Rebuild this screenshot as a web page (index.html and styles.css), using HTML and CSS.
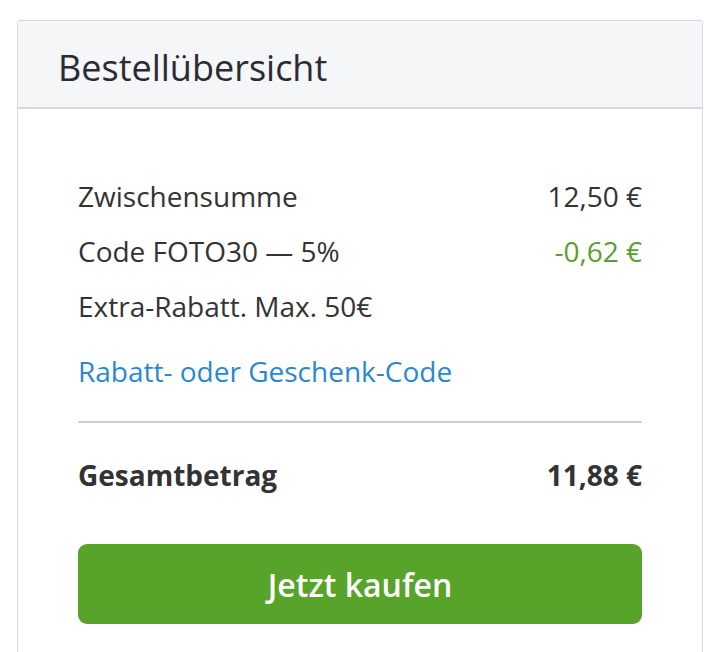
FILE: index.html
```html
<!DOCTYPE html>
<html lang="de">
<head>
<meta charset="utf-8">
<title>Bestellübersicht</title>
<link rel="stylesheet" href="styles.css">
</head>
<body>
<section class="card">
  <header class="card-header">
    <h2 class="card-title">Bestellübersicht</h2>
  </header>
  <div class="card-body">
    <div class="row">
      <span>Zwischensumme</span>
      <span>12,50 €</span>
    </div>
    <div class="row">
      <span>Code FOTO30 — 5%</span>
      <span class="discount">-0,62 €</span>
    </div>
    <div class="row">
      <span>Extra-Rabatt. Max. 50€</span>
    </div>
    <a class="code-link" href="#">Rabatt- oder Geschenk-Code</a>
    <hr class="divider">
    <div class="row total">
      <span>Gesamtbetrag</span>
      <span>11,88 €</span>
    </div>
    <button class="buy" type="button">Jetzt kaufen</button>
  </div>
</section>
</body>
</html>
```

FILE: styles.css
```css
* { box-sizing: border-box; }
html, body { margin: 0; padding: 0; background: #fff; }
body {
  padding: 20px 17px 0 17px;
  font-family: "Open Sans", "Noto Sans", sans-serif;
  color: #333333;
}
.card {
  width: 686px;
  border: 1px solid #d6d9dd;
  border-bottom: none;
  border-radius: 3px 3px 0 0;
  background: #fff;
}
.card-header {
  background: #f5f6f8;
  border-bottom: 2px solid #d6d9dd;
  height: 88px;
  padding: 0 40px;
  display: flex;
  align-items: center;
}
.card-title {
  margin: 0;
  font-weight: 400;
  font-size: 36px;
  line-height: 40px;
  color: #2b2b33;
  padding-top: 7px;
}
.card-body {
  padding: 60px 60px 40px 60px;
  display: flex;
  flex-direction: column;
}
.row {
  display: flex;
  justify-content: space-between;
  font-size: 28px;
  line-height: 55px;
}
.discount { color: #5a9e2f; }
.code-link {
  margin-top: 10px;
  font-size: 28px;
  line-height: 55px;
  color: #2b87d1;
  text-decoration: none;
  align-self: flex-start;
}
.divider {
  margin: 22px 0 0 0;
  border: none;
  border-top: 2px solid #cfcfcf;
  height: 0;
}
.total {
  margin-top: 25px;
  font-weight: 700;
}
.buy {
  margin-top: 41px;
  height: 80px;
  border: none;
  border-radius: 9px;
  background: #58a32a;
  color: #fff;
  font-family: "Open Sans", "Noto Sans", sans-serif;
  font-size: 32px;
  font-weight: 600;
  cursor: pointer;
}
```
